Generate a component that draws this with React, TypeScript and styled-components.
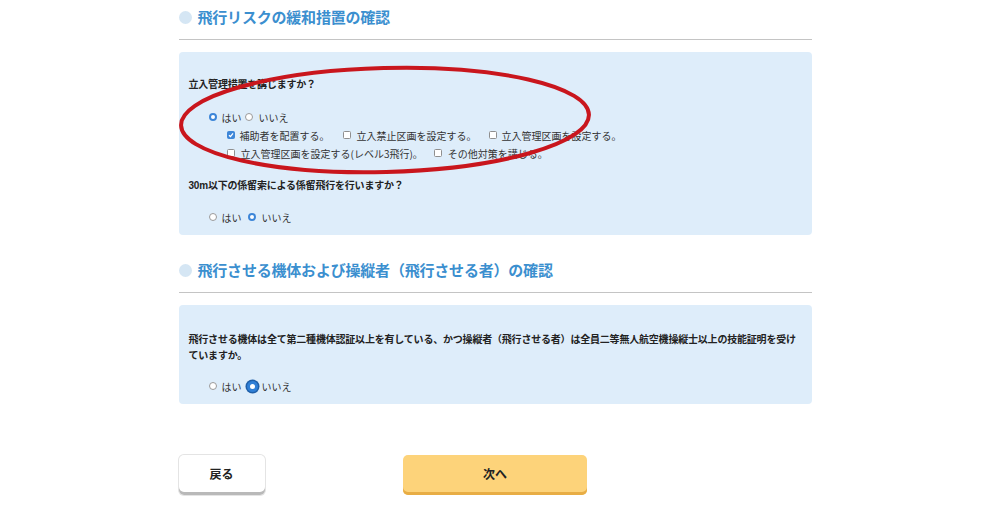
import React from "react";
import styled, { createGlobalStyle } from "styled-components";

const Global = createGlobalStyle`
  html, body { margin: 0; padding: 0; background: #ffffff; }
  body { font-family: "Liberation Sans", "Noto Sans CJK JP", sans-serif; color: #222; }
`;

const Page = styled.div`
  width: 633px;
  margin: 0 auto;
  position: relative;
  padding-top: 6px;
  padding-bottom: 24px;
`;

const SectionHeader = styled.div<{ $top: number }>`
  display: flex;
  align-items: center;
  gap: 6px;
  margin-top: ${(p) => p.$top}px;
  padding-bottom: 11px;
  border-bottom: 1px solid #c4c4c4;
`;

const Dot = styled.span`
  width: 13px;
  height: 13px;
  border-radius: 50%;
  background: #d5e6f4;
  flex: none;
`;

const HeaderText = styled.h2`
  margin: 0;
  font-family: "Noto Sans CJK JP", sans-serif;
  font-size: 15px;
  line-height: 22px;
  font-weight: 700;
  color: #3b8fcf;
  letter-spacing: -0.2px;
`;

const Panel = styled.div<{ $pt: number; $pb: number }>`
  margin-top: 12px;
  background: #deedfa;
  border-radius: 4px;
  padding: ${(p) => p.$pt}px 10px ${(p) => p.$pb}px 10px;
`;

const Question = styled.p<{ $mt?: number }>`
  margin: ${(p) => p.$mt ?? 0}px 0 0 0;
  font-family: "Liberation Sans", "Noto Sans CJK JP", sans-serif;
  font-size: 10px;
  line-height: 16px;
  font-weight: 700;
  letter-spacing: -0.2px;
  color: #222;
`;

const OptionRow = styled.div<{ $mt?: number; $indent: number }>`
  display: flex;
  align-items: center;
  height: 18px;
  margin-top: ${(p) => p.$mt ?? 0}px;
  padding-left: ${(p) => p.$indent}px;
  font-family: "Noto Sans CJK JP", sans-serif;
  font-size: 10px;
  color: #333;
`;

const Option = styled.label<{ $gap: number; $mr: number }>`
  display: inline-flex;
  align-items: center;
  gap: ${(p) => p.$gap}px;
  margin-right: ${(p) => p.$mr}px;
  white-space: nowrap;
`;

const Radio = styled.span<{ $checked?: boolean; $focus?: boolean }>`
  box-sizing: border-box;
  width: ${(p) => (p.$focus ? 11 : 8)}px;
  height: ${(p) => (p.$focus ? 11 : 8)}px;
  border-radius: 50%;
  flex: none;
  background: #ffffff;
  border: ${(p) =>
    p.$checked ? (p.$focus ? "3px solid #2f7fd6" : "2.5px solid #3d86d8") : "1px solid #9a9a9a"};
  box-shadow: ${(p) => (p.$focus ? "0 0 0 1.5px #1f5fa8" : "none")};
`;

const Checkbox = styled.span<{ $checked?: boolean }>`
  box-sizing: border-box;
  width: 8px;
  height: 8px;
  border-radius: 1.5px;
  flex: none;
  display: inline-flex;
  align-items: center;
  justify-content: center;
  background: ${(p) => (p.$checked ? "#3d86d8" : "#ffffff")};
  border: 1px solid ${(p) => (p.$checked ? "#3d86d8" : "#8f8f8f")};
`;

const Buttons = styled.div`
  display: grid;
  grid-template-columns: 1fr auto 1fr;
  align-items: start;
  margin-top: 51px;
`;

const Button = styled.button<{ $primary?: boolean; $w: number }>`
  width: ${(p) => p.$w}px;
  height: 40px;
  box-sizing: border-box;
  border: none;
  border-radius: 5px;
  font-family: "Noto Sans CJK JP", sans-serif;
  font-size: 12px;
  font-weight: 700;
  color: #222;
  padding: 0 0 3px 0;
  background: ${(p) => (p.$primary ? "#fdd37a" : "#ffffff")};
  box-shadow: ${(p) =>
    p.$primary
      ? "inset 0 -3px 0 #e8ad45"
      : "inset 0 -3px 0 #b9b9b9, 0 0 0 1px #e4e4e4"};
  justify-self: ${(p) => (p.$primary ? "center" : "start")};
`;

const Annotation = styled.svg`
  position: absolute;
  left: 0;
  top: 0;
  pointer-events: none;
  overflow: visible;
`;

const Check = () => (
  <svg width="6" height="6" viewBox="0 0 6 6">
    <path d="M1 3.2 L2.5 4.6 L5 1.4" fill="none" stroke="#fff" strokeWidth="1.3" />
  </svg>
);

export default function App() {
  return (
    <>
      <Global />
      <Page>
        <SectionHeader $top={0}>
          <Dot />
          <HeaderText>飛行リスクの緩和措置の確認</HeaderText>
        </SectionHeader>
        <Panel $pt={25} $pb={9}>
          <Question>立入管理措置を講じますか？</Question>
          <OptionRow $mt={15} $indent={20}>
            <Option $gap={5} $mr={3}>
              <Radio $checked />
              はい
            </Option>
            <Option $gap={6} $mr={0}>
              <Radio />
              いいえ
            </Option>
          </OptionRow>
          <OptionRow $indent={38}>
            <Option $gap={5} $mr={13}>
              <Checkbox $checked>
                <Check />
              </Checkbox>
              補助者を配置する。
            </Option>
            <Option $gap={6} $mr={12}>
              <Checkbox />
              立入禁止区画を設定する。
            </Option>
            <Option $gap={5} $mr={0}>
              <Checkbox />
              立入管理区画を設定する。
            </Option>
          </OptionRow>
          <OptionRow $indent={38}>
            <Option $gap={6} $mr={11}>
              <Checkbox />
              立入管理区画を設定する(レベル3飛行)。
            </Option>
            <Option $gap={6} $mr={0}>
              <Checkbox />
              その他対策を講じる。
            </Option>
          </OptionRow>
          <Question $mt={16}>30m以下の係留索による係留飛行を行いますか？</Question>
          <OptionRow $mt={14} $indent={20}>
            <Option $gap={5} $mr={6}>
              <Radio />
              はい
            </Option>
            <Option $gap={6} $mr={0}>
              <Radio $checked />
              いいえ
            </Option>
          </OptionRow>
        </Panel>

        <SectionHeader $top={24}>
          <Dot />
          <HeaderText>飛行させる機体および操縦者（飛行させる者）の確認</HeaderText>
        </SectionHeader>
        <Panel $pt={27} $pb={9}>
          <Question>
            飛行させる機体は全て第二種機体認証以上を有している、かつ操縦者（飛行させる者）は全員二等無人航空機操縦士以上の技能証明を受けていますか。
          </Question>
          <OptionRow $mt={13} $indent={20}>
            <Option $gap={5} $mr={5}>
              <Radio />
              はい
            </Option>
            <Option $gap={4} $mr={0}>
              <Radio $checked $focus />
              いいえ
            </Option>
          </OptionRow>
        </Panel>

        <Buttons>
          <Button $w={86}>戻る</Button>
          <Button $primary $w={184}>次へ</Button>
          <span />
        </Buttons>

        <Annotation width="633" height="200" viewBox="0 0 633 200">
          <ellipse
            cx="206"
            cy="120"
            rx="204"
            ry="52"
            fill="none"
            stroke="#c9161d"
            strokeWidth="4"
            transform="rotate(-1.5 206 120)"
          />
        </Annotation>
      </Page>
    </>
  );
}
